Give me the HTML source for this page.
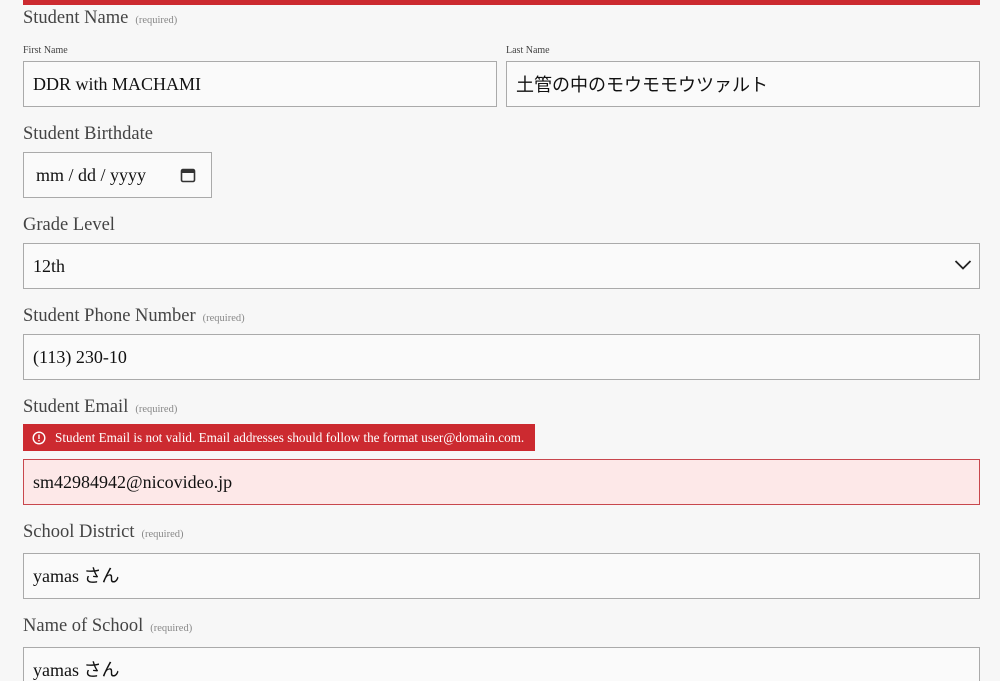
<!DOCTYPE html>
<html><head><meta charset="utf-8"><style>
*{box-sizing:border-box;margin:0;padding:0}
html,body{width:1000px;height:681px;overflow:hidden}
body{background:#f7f7f7;font-family:"Liberation Serif","Noto Sans CJK JP",serif;color:#333;position:relative}
.a{position:absolute}
.bar{left:23px;top:0;width:957px;height:5px;background:#cc2a30}
.lbl{font-size:18.5px;color:#444;white-space:nowrap}
.req{font-size:10.5px;color:#888;margin-left:7px}
.sm{font-size:10px;color:#444}
.in{background:#fafafa;border:1px solid #aaa;height:46px;font-size:18px;color:#111;padding-left:9px;line-height:44px;white-space:nowrap}
.err{left:23px;top:424px;width:512px;height:27px;background:#cc2a30;color:#fff;font-size:13.2px;line-height:27px;padding-left:32px;white-space:nowrap}
</style></head><body>
<div class="a bar"></div>
<div class="a lbl" style="left:23px;top:8px">Student Name<span class="req">(required)</span></div>
<div class="a sm" style="left:23px;top:45px">First Name</div>
<div class="a sm" style="left:506px;top:45px">Last Name</div>
<div class="a in" style="left:23px;top:61px;width:474px">DDR with MACHAMI</div>
<div class="a in" style="left:506px;top:61px;width:474px;font-family:'Noto Sans CJK JP',sans-serif">土管の中のモウモモウツァルト</div>
<div class="a lbl" style="left:23px;top:124px">Student Birthdate</div>
<div class="a in" style="left:23px;top:152px;width:189px;padding-left:12px">mm / dd / yyyy
<svg class="a" style="left:156px;top:14px" width="16" height="16" viewBox="0 0 16 16"><rect x="1.5" y="2.5" width="13" height="12" rx="1.5" fill="none" stroke="#333" stroke-width="1.6"/><rect x="1.5" y="2.5" width="13" height="3.5" fill="#333"/></svg></div>
<div class="a lbl" style="left:23px;top:215px">Grade Level</div>
<div class="a in" style="left:23px;top:243px;width:957px">12th
<svg class="a" style="left:930px;top:15px" width="18" height="12" viewBox="0 0 18 12"><path d="M1.5 2 L9 9.5 L16.5 2" fill="none" stroke="#222" stroke-width="1.8"/></svg></div>
<div class="a lbl" style="left:23px;top:306px">Student Phone Number<span class="req">(required)</span></div>
<div class="a in" style="left:23px;top:334px;width:957px">(113) 230-10</div>
<div class="a lbl" style="left:23px;top:397px">Student Email<span class="req">(required)</span></div>
<div class="a err">Student Email is not valid. Email addresses should follow the format user@domain.com.
<svg class="a" style="left:9px;top:7px" width="14" height="14" viewBox="0 0 14 14"><circle cx="7" cy="7" r="5.8" fill="none" stroke="#fff" stroke-width="1.4"/><rect x="6.3" y="3.5" width="1.4" height="4.5" fill="#fff"/><rect x="6.3" y="9" width="1.4" height="1.4" fill="#fff"/></svg></div>
<div class="a in" style="left:23px;top:459px;width:957px;background:#fde8e8;border-color:#c8474d">sm42984942@nicovideo.jp</div>
<div class="a lbl" style="left:23px;top:522px">School District<span class="req">(required)</span></div>
<div class="a in" style="left:23px;top:553px;width:957px">yamas さん</div>
<div class="a lbl" style="left:23px;top:616px">Name of School<span class="req">(required)</span></div>
<div class="a in" style="left:23px;top:647px;width:957px">yamas さん</div>
</body></html>
